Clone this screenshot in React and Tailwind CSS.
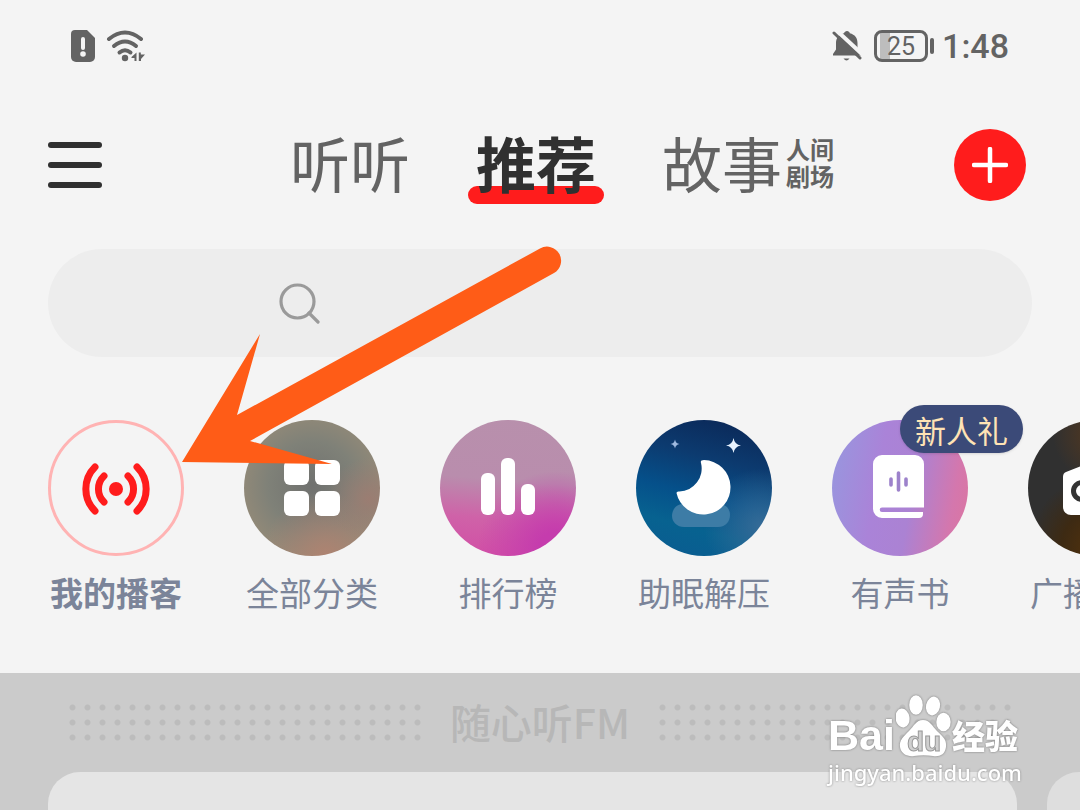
import React from "react";

function SimAlertIcon() {
  return (
    <svg width="26" height="34" viewBox="0 0 26 34" aria-hidden="true">
      <path d="M5 1h12l8 8v19a5 5 0 0 1-5 5H6a5 5 0 0 1-5-5V5a4 4 0 0 1 4-4z" fill="#636363" />
      <path d="M13 10v9" stroke="#f4f4f4" strokeWidth="4" strokeLinecap="round" />
      <circle cx="13" cy="25" r="2.8" fill="#f4f4f4" />
    </svg>
  );
}

function WifiIcon() {
  return (
    <svg width="40" height="34" viewBox="0 0 40 34" aria-hidden="true">
      <g fill="none" stroke="#636363" strokeWidth="4" strokeLinecap="round">
        <path d="M3 10q16-13 32 0" />
        <path d="M8 17q11-9 22 0" />
        <path d="M13.500 23.500q5.500-4.500 11 0" />
      </g>
      <circle cx="19" cy="29" r="3.200" fill="#636363" />
      <path d="M30.500 23.500v8.500h-2v-3h-3v-1zM32.800 32v-8.500h2v2h4.200l-4 4.500v2z" fill="#636363" />
    </svg>
  );
}

function MutedBellIcon() {
  return (
    <svg width="30" height="32" viewBox="0 0 30 32" aria-hidden="true">
      <path d="M15 1c1.500 0 2.500 1 2.800 2.200C23 4.500 25.500 8 25.500 13v6.500L29 25v.5H1V24l3-4.500V13c0-5 3-8.500 8-9.800C12.500 2 13.500 1 15 1z" fill="#636363" />
      <path d="M3-1l28 26" stroke="#f4f4f4" strokeWidth="4" />
      <path d="M2 3l26 25" stroke="#636363" strokeWidth="3" strokeLinecap="round" />
      <path d="M11.500 28.500h6q-3 4-6 0z" fill="#636363" />
    </svg>
  );
}

function StatusBar() {
  return (
    <div className="flex h-[92px] shrink-0 items-center justify-between pr-[71px] pl-[70px]">
      <div className="flex items-center gap-2.5">
        <SimAlertIcon />
        <WifiIcon />
      </div>
      <div className="flex items-center text-[#636363]">
        <MutedBellIcon />
        <div className="ml-3 flex h-8 w-[54px] items-center justify-center rounded-lg border-3 border-[#636363] bg-[linear-gradient(90deg,#f4f4f4_3px,#bdbdbd_3px,#bdbdbd_13px,#f4f4f4_13px)] font-[Roboto,sans-serif] text-[25px] leading-none">
          25
        </div>
        <span className="ml-0.5 h-4 w-1 rounded-sm bg-[#636363]" />
        <time className="ml-2 font-[Roboto,sans-serif] text-[34px] leading-none font-medium">1:48</time>
      </div>
    </div>
  );
}

function Header() {
  return (
    <header className="flex h-[146px] shrink-0 items-center pr-[54px] pl-12">
      <button type="button" aria-label="菜单" className="flex w-[54px] flex-col gap-3.5">
        <span className="h-1.5 rounded-full bg-[#303030]" />
        <span className="h-1.5 rounded-full bg-[#303030]" />
        <span className="h-1.5 rounded-full bg-[#303030]" />
      </button>
      <nav className="flex flex-1 items-center justify-center gap-[66px] pb-1.5 pl-[68px] text-[60px] leading-[74px] text-[#636363]">
        <a href="#listen">听听</a>
        <a href="#recommend" aria-current="page" className="relative font-bold text-[#303030]">
          <span className="absolute -inset-x-2 -bottom-[5px] h-[18px] rounded-full bg-[#ff1c1c]" />
          <span className="relative">推荐</span>
        </a>
        <a href="#story" className="flex items-center gap-1">
          故事
          <span className="text-2xl leading-[27px] font-bold">
            人间
            <br />
            剧场
          </span>
        </a>
      </nav>
      <button type="button" aria-label="添加" className="flex size-[72px] items-center justify-center rounded-full bg-[#ff1c1c]">
        <svg width="36" height="36" viewBox="0 0 36 36" aria-hidden="true">
          <path d="M18 2v32M2 18h32" stroke="#fff" strokeWidth="4.500" strokeLinecap="round" />
        </svg>
      </button>
    </header>
  );
}

function SearchBar() {
  return (
    <label className="mx-12 mt-[11px] flex h-[108px] shrink-0 items-center gap-4 rounded-full bg-[#ededed] pr-12 pl-[230px]">
      <svg width="42" height="42" viewBox="0 0 42 42" className="shrink-0" aria-hidden="true">
        <g fill="none" stroke="#9a9a9a" strokeWidth="3.200" strokeLinecap="round">
          <circle cx="19.500" cy="19.500" r="16.500" />
          <path d="M31 31l9 9" />
        </g>
      </svg>
      <input type="search" aria-label="搜索" className="min-w-0 flex-1 bg-transparent text-3xl text-[#636363] outline-none" />
    </label>
  );
}

const art = {
  podcast: (
    <>
      <circle cx="68" cy="69" r="7" fill="#ff1c1c" />
      <g fill="none" stroke="#ff1c1c" strokeWidth="7" strokeLinecap="round">
        <path d="M80 56a18 18 0 0 1 0 26M56 56a18 18 0 0 0 0 26" />
        <path d="M89 47a31 31 0 0 1 0 44M47 47a31 31 0 0 0 0 44" />
      </g>
    </>
  ),
  grid: (
    <g fill="#fff">
      <rect x="40" y="40" width="25" height="25" rx="6" />
      <rect x="71" y="40" width="25" height="25" rx="6" />
      <rect x="40" y="71" width="25" height="25" rx="6" />
      <rect x="71" y="71" width="25" height="25" rx="6" />
    </g>
  ),
  rank: (
    <g fill="#fff">
      <rect x="41" y="53" width="14" height="42" rx="6" />
      <rect x="61" y="38" width="14" height="57" rx="6" />
      <rect x="81" y="64" width="14" height="31" rx="6" />
    </g>
  ),
  moon: (
    <>
      <path d="M47 84h36c7 0 11 5 11 11s-4 12-12 12H48c-7 0-12-5-12-11s4-12 11-12z" fill="#3d7ca6" />
      <path d="M65 43q-1-3 3-3A27.300 27.300 0 1 1 40.500 73q0-2 3-1.500A23 23 0 0 0 65 43z" fill="#fff" />
      <path d="M97.500 18q1 6.500 7.500 7.500q-6.500 1-7.500 7.500q-1-6.500-7.500-7.500q6.500-1 7.500-7.500z" fill="#e8f3ff" />
      <path d="M39 19.500q.7 4 4.500 4.500q-3.800.7-4.500 4.500q-.7-3.800-4.500-4.500q3.800-.5 4.500-4.500z" fill="#9fb9df" />
    </>
  ),
  book: (
    <>
      <path d="M50 35h33a9 9 0 0 1 9 9v43.500H50a2.200 2.200 0 0 0 0 4.500h41v2q0 4-4 4H50a9 9 0 0 1-9-9V44a9 9 0 0 1 9-9z" fill="#fff" />
      <g stroke="#9d82cb" strokeWidth="3.600" strokeLinecap="round">
        <path d="M59 59v6M66.500 53v17M74 59v6" />
      </g>
    </>
  ),
  radio: (
    <>
      <path d="M38 52l46-18 2 5-24 9.500h32a8 8 0 0 1 8 8V87a8 8 0 0 1-8 8H43a8 8 0 0 1-8-8V57q0-4 3-5z" fill="#fff" />
      <circle cx="54" cy="71" r="8.500" fill="none" stroke="#333" strokeWidth="5" />
      <path d="M76 65h16M76 77h16" stroke="#333" strokeWidth="5" strokeLinecap="round" />
    </>
  ),
};

const categories = [
  { label: "我的播客", icon: "podcast", bg: "border-3 border-[#ffb3b3]", strong: true },
  { label: "全部分类", icon: "grid", bg: "bg-[radial-gradient(circle_at_92%_58%,#9b7d72_0%,transparent_28%),radial-gradient(circle_at_60%_100%,#ae8371_0%,transparent_40%),radial-gradient(circle_at_50%_48%,#70716f_0%,#7f8178_45%,#938a78_75%)]" },
  { label: "排行榜", icon: "rank", bg: "bg-[radial-gradient(circle_at_85%_95%,#c53cad_0%,#c53cad_10%,transparent_45%),linear-gradient(185deg,#b890ac_0%,#b98dad_45%,#cf62a8_72%,#d24da5_100%)]" },
  { label: "助眠解压", icon: "moon", bg: "bg-[radial-gradient(circle_at_92%_78%,#356b97_0%,transparent_35%),linear-gradient(195deg,#0b2a5a_8%,#0c3b70_32%,#05508a_55%,#076290_75%,#0b5b91_100%)]" },
  { label: "有声书", icon: "book", badge: "新人礼", bg: "bg-[linear-gradient(100deg,#9995de_5%,#aa83d8_35%,#ab82d3_58%,#d477ad_85%,#dd759f_100%)]" },
  { label: "广播电台", icon: "radio", bg: "bg-[radial-gradient(circle_at_55%_10%,#58391d_0%,transparent_35%),radial-gradient(circle_at_55%_95%,#56330b_0%,#3d2a13_28%,transparent_50%),linear-gradient(#303030,#303030)]" },
];

function Categories() {
  return (
    <ul className="mt-[63px] flex shrink-0 gap-[60px] pl-12">
      {categories.map((c) => (
        <li key={c.label} className="w-[136px] shrink-0">
          <a href={"#" + c.icon} className="relative flex flex-col items-center gap-3">
            <span className={"flex size-[136px] items-center justify-center rounded-full " + c.bg}>
              <svg width="136" height="136" viewBox="0 0 136 136" className="shrink-0" aria-hidden="true">
                {art[c.icon]}
              </svg>
            </span>
            <span className={"text-[33px] leading-[48px] whitespace-nowrap text-[#7b8499] " + (c.strong ? "font-bold" : "font-normal")}>
              {c.label}
            </span>
            {c.badge && (
              <span className="absolute -top-[15px] left-[68px] flex h-12 items-center rounded-full bg-[#3b4a78] px-[15px] text-[31px] leading-none whitespace-nowrap text-[#ffe3b5] shadow-sm">
                {c.badge}
              </span>
            )}
          </a>
        </li>
      ))}
    </ul>
  );
}

const dotGrid = "h-[45px] w-[360px] shrink-0 bg-[radial-gradient(circle,#bcbcbc_2.500px,transparent_3.500px)] bg-size-[15px_15px]";

function FmSection() {
  return (
    <section className="mt-[57px] min-h-0 flex-1 overflow-hidden bg-[#cbcbcb]">
      <div className="flex h-[99px] items-center justify-center gap-5">
        <span className={dotGrid} />
        <h2 className="w-[190px] pb-1 text-center text-[41px] leading-[56px] font-medium whitespace-nowrap text-[#b7b7b7]">随心听FM</h2>
        <span className={dotGrid} />
      </div>
      <div className="flex gap-[30px] overflow-hidden pl-12">
        <div className="h-[200px] w-[calc(100vw-111px)] shrink-0 rounded-[32px] bg-[#e5e5e5]" />
        <div className="h-[200px] w-[calc(100vw-111px)] shrink-0 rounded-[32px] bg-[#dedede]" />
      </div>
    </section>
  );
}

function PointerArrow() {
  return (
    <svg className="pointer-events-none absolute top-[240px] left-[176px]" width="390" height="230" viewBox="176 240 390 230" aria-hidden="true">
      <path d="M182 462L260 334L237 415L540 248.500A14 14 0 0 1 554 273L250 441L332 464Z" fill="#ff5c17" />
    </svg>
  );
}

function Watermark() {
  return (
    <div className="pointer-events-none absolute top-[692px] right-[59px] w-[193px] text-white">
      <div className="flex h-[66px] items-end [filter:drop-shadow(0_0_1px_#777)]">
        <span className="w-[68px] font-['Liberation_Sans',sans-serif] text-[43px] leading-[46px] font-bold">Bai</span>
        <div className="relative h-[66px] w-[56px]">
          <svg width="60" height="66" viewBox="0 0 60 66" aria-hidden="true">
            <g fill="#fff">
              <ellipse cx="6.500" cy="26" rx="7" ry="9.500" transform="rotate(-8 6.500 26)" />
              <ellipse cx="20" cy="13" rx="6.800" ry="9.800" />
              <ellipse cx="37" cy="14" rx="7" ry="9.500" transform="rotate(12 37 14)" />
              <ellipse cx="47.500" cy="30" rx="7.200" ry="9.200" />
              <path d="M27 28c7 0 9 6 14 11s10 8 9 16-7 10-13 9-13-1-19 0-13-2-14-9 4-11 9-16 7-11 14-11z" />
            </g>
          </svg>
          <span className="absolute inset-x-0 bottom-0 text-center font-['Liberation_Sans',sans-serif] text-[28px] leading-[32px] font-bold text-[#d0d0d0] [-webkit-text-stroke:1px_#999]">du</span>
        </div>
        <span className="text-[33px] leading-[46px] font-black whitespace-nowrap">经验</span>
      </div>
      <div className="font-['Noto_Sans',sans-serif] text-[22px] leading-7 font-medium [filter:drop-shadow(0_0_1px_#888)]">jingyan.baidu.com</div>
    </div>
  );
}

export default function App() {
  return (
    <main lang="zh-CN" className="relative flex h-screen flex-col overflow-hidden bg-[#f4f4f4] font-['Noto_Sans_CJK_SC',sans-serif]">
      <StatusBar />
      <Header />
      <SearchBar />
      <Categories />
      <FmSection />
      <PointerArrow />
      <Watermark />
    </main>
  );
}
